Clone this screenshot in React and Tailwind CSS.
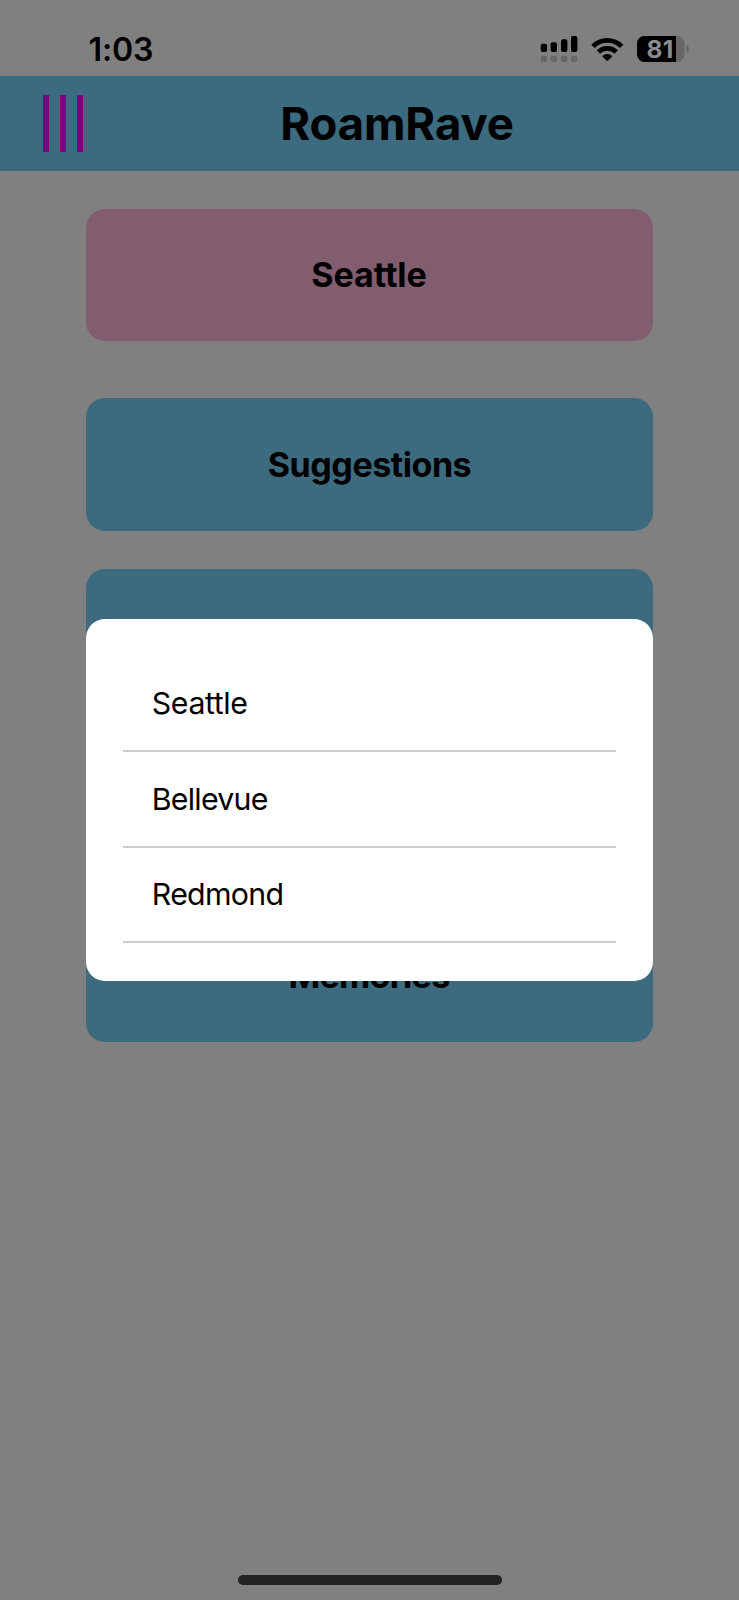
const cities = [
  { name: "Seattle", tracking: "tracking-[-0.4px]" },
  { name: "Bellevue", tracking: "tracking-[-0.75px]" },
  { name: "Redmond", tracking: "tracking-[-0.7px]" },
];

function StatusIcons() {
  return (
    <svg width="152" height="28" viewBox="539 35 152 28" className="block">
      <g fill="#000">
        <rect x="540.7" y="43.7" width="6.4" height="8.3" rx="2" />
        <rect x="550.6" y="42.3" width="6.4" height="9.7" rx="2" />
        <rect x="561" y="39.2" width="6.4" height="12.8" rx="2" />
        <rect x="571" y="36" width="6.4" height="16" rx="2" />
      </g>
      <g fill="#666">
        <rect x="540.7" y="55.8" width="6.4" height="6.2" rx="2" />
        <rect x="550.6" y="55.8" width="6.4" height="6.2" rx="2" />
        <rect x="561" y="55.8" width="6.4" height="6.2" rx="2" />
        <rect x="571" y="55.8" width="6.4" height="6.2" rx="2" />
      </g>
      <g fill="none" stroke="#000" strokeWidth="4.8">
        <path d="M593 46.4a20.2 20.2 0 0 1 28.6 0" />
        <path d="M598.4 52a12.6 12.6 0 0 1 17.8 0" />
      </g>
      <path d="M602.2 56.2a7.3 7.3 0 0 1 10.2 0l-4.3 4.4q-.8.7-1.6 0z" fill="#000" />
      <clipPath id="battery">
        <rect x="637" y="36" width="47.5" height="26" rx="7.5" />
      </clipPath>
      <g clipPath="url(#battery)">
        <rect x="637" y="36" width="48" height="26" fill="#666" />
        <rect x="637" y="36" width="39" height="26" fill="#000" />
      </g>
      <path d="M686.4 44.8q2.8 1.4 2.8 4.2t-2.8 4.2z" fill="#666" />
      <text
        x="660"
        y="57.6"
        textAnchor="middle"
        className="fill-[#8c8c8c] text-[24.5px] font-bold tracking-[0.3px]"
      >
        81
      </text>
    </svg>
  );
}

function Card({ children, className }) {
  return (
    <div
      className={`flex h-[132.6px] shrink-0 items-center justify-center rounded-[19px] pt-px text-[34.1px] leading-none font-bold ${className}`}
    >
      {children}
    </div>
  );
}

export default function App() {
  return (
    <div className="relative flex h-[1600px] w-[739px] flex-col overflow-hidden bg-[#808080] font-['Inter','Liberation_Sans',sans-serif] text-black [font-feature-settings:'calt'_0,'liga'_0,'dlig'_0]">
      <div className="flex h-[76px] shrink-0 items-start justify-between pt-[35px] pr-[48px] pl-[88.5px]">
        <span className="text-[32.2px] leading-[29px] font-semibold tracking-[-0.2px]">1:03</span>
        <StatusIcons />
      </div>

      <header className="flex h-[94.5px] shrink-0 items-center bg-[#3c6a7e] pl-[43px]">
        <button aria-label="Menu" className="flex h-[57px] gap-[11px]">
          <span className="w-[6px] bg-[#800080]" />
          <span className="w-[6px] bg-[#800080]" />
          <span className="w-[6px] bg-[#800080]" />
        </button>
        <h1 className="flex-1 pt-px pr-[28px] text-center text-[45.5px] leading-none font-bold tracking-[-0.1px]">
          RoamRave
        </h1>
      </header>

      <main className="flex flex-col px-[85.7px] pt-[38.2px]">
        <Card className="bg-[#815d6f] pr-px tracking-[-0.1px]">Seattle</Card>
        <div className="flex flex-col gap-[37.9px] pt-[57px]">
          <Card className="bg-[#3c6a7e] tracking-[-0.5px]">Suggestions</Card>
          <Card className="bg-[#3c6a7e]" />
          <Card className="bg-[#3c6a7e]" />
          <Card className="bg-[#3c6a7e] pr-px tracking-[-0.7px]">Memories</Card>
        </div>
      </main>

      <div className="absolute inset-0 flex items-center justify-center">
        <ul
          role="dialog"
          className="flex w-[567.6px] flex-col rounded-[19px] bg-white px-[37.7px] pt-[37.9px] pb-[37.9px]"
        >
          {cities.map(({ name, tracking }) => (
            <li
              key={name}
              className={`flex h-[95.5px] items-center border-b-2 border-[#ccc] pl-[28.4px] text-[30.3px] leading-none ${tracking}`}
            >
              {name}
            </li>
          ))}
        </ul>
      </div>

      <div className="absolute bottom-[15.5px] left-[238px] h-[9.5px] w-[263.5px] rounded-full bg-[#222]" />
    </div>
  );
}
